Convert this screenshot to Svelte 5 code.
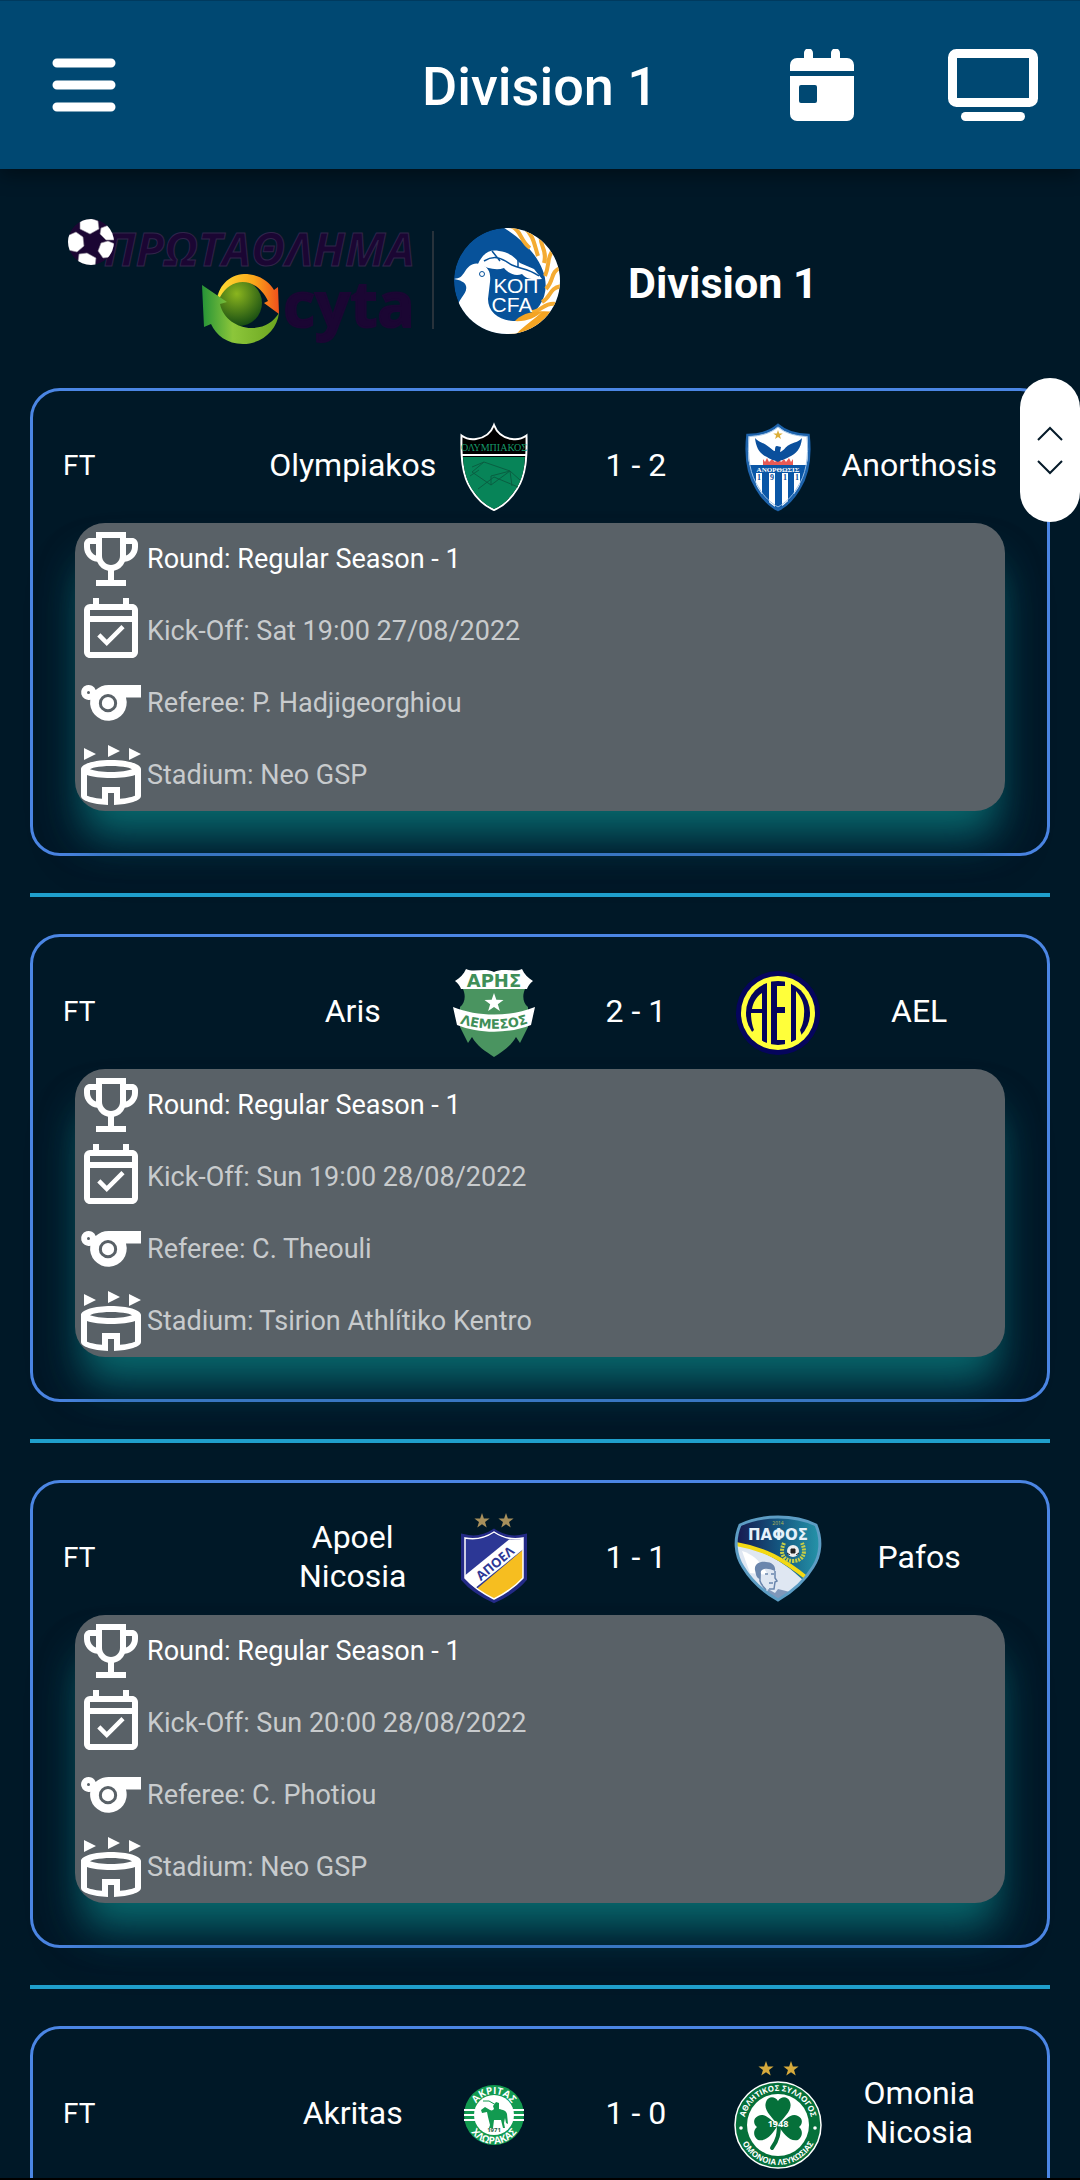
<script>
  const matches = [
    {
      home: 'Olympiakos', away: 'Anorthosis', score: '1 - 2',
      details: ['Round: Regular Season - 1', 'Kick-Off: Sat 19:00 27/08/2022', 'Referee: P. Hadjigeorghiou', 'Stadium: Neo GSP'],
    },
    {
      home: 'Aris', away: 'AEL', score: '2 - 1',
      details: ['Round: Regular Season - 1', 'Kick-Off: Sun 19:00 28/08/2022', 'Referee: C. Theouli', 'Stadium: Tsirion Athlítiko Kentro'],
    },
    {
      home: 'Apoel Nicosia', away: 'Pafos', score: '1 - 1',
      details: ['Round: Regular Season - 1', 'Kick-Off: Sun 20:00 28/08/2022', 'Referee: C. Photiou', 'Stadium: Neo GSP'],
    },
    { home: 'Akritas', away: 'Omonia Nicosia', score: '1 - 0', details: [] },
  ];

  const icons = [
    'M19 5h-2V3H7v2H5c-1.1 0-2 .9-2 2v1c0 2.55 1.92 4.63 4.39 4.94A5.01 5.01 0 0 0 11 15.9V19H7v2h10v-2h-4v-3.1a5.01 5.01 0 0 0 3.61-2.96C19.08 12.63 21 10.55 21 8V7c0-1.1-.9-2-2-2zM5 8V7h2v3.82C5.84 10.4 5 9.3 5 8zm7 6c-1.65 0-3-1.35-3-3V5h6v6c0 1.65-1.35 3-3 3zm7-6c0 1.3-.84 2.4-2 2.82V7h2v1z',
    'M16.53 11.06 15.47 10l-4.88 4.88-2.12-2.12-1.06 1.06L10.59 17l5.94-5.94zM19 3h-1V1h-2v2H8V1H6v2H5a2 2 0 0 0-2 2v14c0 1.1.89 2 2 2h14c1.1 0 2-.9 2-2V5c0-1.1-.9-2-2-2zm0 16H5V9h14v10zM5 7V5h14v2H5z',
    'M11.2 6c-1.7 0-3.2.6-4.3 1.7A2.5 2.5 0 1 0 5.1 10.9a6.1 6.1 0 1 0 11.9-.7h5V6H11.2zM4.5 9a.5.5 0 1 1 0-1 .5.5 0 0 1 0 1zM11 15.1a3 3 0 1 1 0-6.1 3 3 0 0 1 0 6.1zM11 14.1a2 2 0 1 0 0-4.1 2 2 0 0 0 0 4.1z',
    'M7 5 3 7V3l4 2zm11-2v4l4-2-4-2zm-7-1v4l4-2-4-2zM12 7C6.5 7 2 8.3 2 10v9c0 1.5 3.9 2.8 9 3v-4h2v4c5.1-.2 9-1.5 9-3v-9c0-1.7-4.5-3-10-3zm0 2c4.2 0 7 .8 7 1.1-1.4.5-3.8.9-7 .9s-5.6-.4-7-.9C5 9.8 7.8 9 12 9zm8 9.9c-.7.3-2.4.8-5 1V16H9v3.9c-2.600-.2-4.300-.7-5-1V12c1.800.6 4.600 1 8 1s6.200-.4 8-1v6.900z',
  ];

  // Five-pointed star outline around a centre point.
  function star(cx, cy, r) {
    return Array.from({ length: 10 }, (_, i) => {
      const a = -Math.PI / 2 + (i * Math.PI) / 5;
      const d = i % 2 ? r * 0.4 : r;
      return `${(cx + d * Math.cos(a)).toFixed(2)},${(cy + d * Math.sin(a)).toFixed(2)}`;
    }).join(' ');
  }
</script>

{#snippet crest(team)}
  {#if team === 'Olympiakos'}
    <svg class="crest" viewBox="0 0 88 88" role="img" aria-label="Olympiakos crest">
      <path d="M44 2C41 10 34 15 26 16c-6 1-11-1-14.500-3.500C11 34 12 52 21 66c6 10 14 17 23 21 9-4 17-11 23-21 9-14 10-32 9.500-53.500C73 15 68 17 62 16 54 15 47 10 44 2z" fill="#000" stroke="#fff" stroke-width="2" />
      <path d="M13 34h62c-1 13-3 23-9 32-6 9-13 16-22 20-9-4-16-11-22-20-6-9-8-19-9-32z" fill="#078458" />
      <path d="M12 32h64" stroke="#fff" stroke-width="2" />
      <path d="m22 49 12-10 26 9-19 14-19-13zm19 13v-9l19-5 2 15M22 44l12-5M28 66l16-12 24 10M60 48l10 9M20 53l9-6" fill="none" stroke="#0a5f42" stroke-width="1" />
      <text x="44" y="28" font-size="10" fill="#16996b" class="serif">ΟΛΥΜΠΙΑΚΟΣ</text>
    </svg>
  {:else if team === 'Anorthosis'}
    <svg class="crest" viewBox="0 0 88 88" role="img" aria-label="Anorthosis crest">
      <clipPath id="ano"><path d="M44 2C36 9 24 12 13.500 12 11 34 14 52 23 66c6 10 13 17 21 21 8-4 15-11 21-21 9-14 12-32 9.500-54C64 12 52 9 44 2z" /></clipPath>
      <g clip-path="url(#ano)">
        <path fill="#fff" d="M0 0h88v88H0z" />
        <path fill="#0a56a6" d="M0 42h88v46H0z" />
        <path fill="#fff" d="M22 50h6v38h-6zm13 0h6v38h-6zm13 0h6v38h-6zm12 0h6v38h-6z" />
      </g>
      <path d="M29 42v-6l2 3 2-4 2 4 3-3 3 3 3-4 3 4 3-3 2 3 3-4 2 4 2-3v6z" fill="#e85a55" />
      <path d="M21 15c3 4 9 5 14 9 3 2 4 4 6 4 0-3 0-5 2-5l4 1-1 5c5-2 5-5 9-7 5-3 10-3 13-7-1 11-6 16-13 19-5 3-8 3-11 5-4-2-7-2-11-5-7-3-11-9-12-19z" fill="#0a4f9c" />
      <polygon points={star(44, 12, 5)} fill="#dcae38" />
      <text x="44" y="48.500" font-size="7" font-weight="700" fill="#fff" class="serif">ΑΝΟΡΘΩΣΙΣ</text>
      <g font-size="8" font-weight="700" fill="#0a4f9c" class="serif"><text x="25" y="57">1</text><text x="38" y="57">9</text><text x="51" y="57">1</text><text x="63" y="57">1</text></g>
      <path d="M44 2C36 9 24 12 13.500 12 11 34 14 52 23 66c6 10 13 17 21 21 8-4 15-11 21-21 9-14 12-32 9.500-54C64 12 52 9 44 2z" fill="none" stroke="#1d63ac" stroke-width="2.500" />
      <path d="M44 4C36 11 25 13 15 13.500 13 34 16 52 25 65c5 9 12 15 19 19 7-4 14-10 19-19 9-13 12-31 10-51.500C63 13 52 11 44 4z" fill="none" stroke="#9fc3e8" stroke-width="1" />
    </svg>
  {:else if team === 'Aris'}
    <svg class="crest" viewBox="0 0 88 88" role="img" aria-label="Aris crest">
      <path d="M13 20h62c-3 7-2 14 3 18v20l-8 16-4-6c-5 9-13 14-22 20-9-6-17-11-22-20l-4 6-8-16V38c5-4 6-11 3-18z" fill="#4a9460" />
      <path d="M16 0c9 4 18-2 28 3 10-5 19 1 28-3 2 5 6 9 11 12-3 2-5 5-6 8H11c-1-3-3-6-6-8 5-3 9-7 11-12z" fill="#fff" />
      <path d="M3 38c25 10 57 10 82 0l-4 18c-22 9-52 9-74 0L3 38z" fill="#fff" />
      <polygon points={star(44, 34, 10)} fill="#fff" />
      <text x="44" y="18" font-size="18" font-weight="700" fill="#3f8f58" class="wide">ΑΡΗΣ</text>
      <path id="arisArc" d="M6 53c24 9 52 9 76 0" fill="none" />
      <text font-size="13" font-weight="700" fill="#3f8f58" class="wide"><textPath href="#arisArc" startOffset="50%">ΛΕΜΕΣΟΣ</textPath></text>
    </svg>
  {:else if team === 'AEL'}
    <svg class="crest" viewBox="0 0 88 88" role="img" aria-label="AEL crest">
      <circle cx="44" cy="44" r="42" fill="#05055c" />
      <circle cx="44" cy="44" r="37" fill="#ffff3a" />
      <circle cx="44" cy="44" r="32" fill="#05055c" />
      <g fill="#ffff3a">
        <path d="M33 12v64h4V11zM51 12v64h4V11z" />
        <path d="M28 24c-6 4-9 10-10 16h10zM17 44c0 6 1 12 3 17l-4 4 12 9V44z" />
        <path d="M43 17h12v21H43zM43 44h12v27H43zM53 11h4v66h-4zM52 37h4v8h-4z" />
        <path d="M62 22c6 7 9 14 8 23 0 7-2 12-4 16l2 6-6 6z" />
      </g>
    </svg>
  {:else if team === 'Apoel Nicosia'}
    <svg class="crest" viewBox="0 0 88 88" role="img" aria-label="Apoel Nicosia crest">
      <clipPath id="apo"><path d="M44 16c-9 6-20 8-31 5v43c9 11 20 17 31 22 11-5 22-11 31-22V21c-11 3-22 1-31-5z" /></clipPath>
      <g clip-path="url(#apo)">
        <path fill="#2c3795" d="M0 0h88v88H0z" />
        <path fill="#f6be20" d="M88 22v66H10z" />
        <path fill="#fff" d="M8 66 72 14l14 10-62 50z" />
      </g>
      <path d="M44 16c-9 6-20 8-31 5v43c9 11 20 17 31 22 11-5 22-11 31-22V21c-11 3-22 1-31-5z" fill="none" stroke="#232a86" stroke-width="4" />
      <path d="M44 17c-9 6-19 8-29 6v40c9 10 19 16 29 21 10-5 20-11 29-21V23c-10 2-20 0-29-6z" fill="none" stroke="#fff" stroke-width="1.500" />
      <polygon points={star(32, 6, 8)} fill="#a8905c" /><polygon points={star(56, 6, 8)} fill="#a8905c" />
      <text transform="translate(48 52) rotate(-40)" font-size="13" font-weight="700" fill="#2c3795">ΑΠΟΕΛ</text>
    </svg>
  {:else if team === 'Pafos'}
    <svg class="crest" viewBox="0 0 88 88" role="img" aria-label="Pafos crest">
      <linearGradient id="paf"><stop offset="0" stop-color="#18164c" /><stop offset=".5" stop-color="#14557f" /><stop offset="1" stop-color="#2697ab" /></linearGradient>
      <clipPath id="pafc"><path d="M44 2C30 2 16 5 6 10 0 24 1 40 9 52c9 15 21 25 35 33 14-8 26-18 35-33 8-12 9-28 3-42C72 5 58 2 44 2z" /></clipPath>
      <g clip-path="url(#pafc)">
        <path fill="url(#paf)" d="M0 0h88v88H0z" />
        <path d="M0 30c28 4 50 16 72 38L44 88H20L0 50z" fill="#dfe7f2" />
        <path d="M8 36c13 4 19 12 26 24L16 58z" fill="#fff" />
        <path d="M2 29c29 5 47 15 72 35" fill="none" stroke="#f4d914" stroke-width="4" />
        <path d="M21 55c-1-6 5-9 11-8 6 0 10 4 9 9-7-3-11-3-14 0l-1 8c-4-1-4-5-5-9z" fill="#6a86ad" />
        <path d="M26 58v8c1 4 4 6 6 9M41 56v7l2 3-2 1-1 7h-5M31 59h3M37 59h3M35 68h4" fill="none" stroke="#6a86ad" stroke-width="1.500" />
        <path d="M30 88l4-14 7 4 3-4 16 4-16 10z" fill="#7f97ba" />
      </g>
      <path d="M44 2C30 2 16 5 6 10 0 24 1 40 9 52c9 15 21 25 35 33 14-8 26-18 35-33 8-12 9-28 3-42C72 5 58 2 44 2z" fill="none" stroke="#5d9dc4" stroke-width="3" />
      <path d="M50 28c-5 11 0 18 9 18s14-7 9-18" fill="none" stroke="#c9cf45" stroke-width="4" stroke-dasharray="2 1" />
      <circle cx="59" cy="36" r="6" fill="#eee" /><path d="M57 34h4v4h-4zM53 38l3 2M65 38l-3 2" fill="#222" stroke="#222" />
      <text x="44" y="10" font-size="5" fill="#b9b851">2014</text>
      <text x="44" y="25" font-size="15" font-weight="700" fill="#e6f1fa" class="wide">ΠΑΦΟΣ</text>
    </svg>
  {:else if team === 'Akritas'}
    <svg class="crest small" viewBox="0 0 60 60" role="img" aria-label="Akritas crest">
      <circle cx="30" cy="30" r="30" fill="#129a50" />
      <path d="M0 25h60M0 30h60M0 35h60" stroke="#fff" stroke-width="2" />
      <circle cx="30" cy="30" r="20" fill="#fff" />
      <path d="m17 25 4-3 5 3c2 1 3 0 4-1l-1-3 3-4 3 1v6c4 1 7 1 8 5l1 10-2-1-1-5-1 5 1 5h-2l-2-8-7 0-1 8h-4l1-3-2-8-1-5-5 1z" fill="#129a50" />
      <path d="M19 16h6l7 4" fill="none" stroke="#129a50" stroke-width="1" />
      <path id="akTop" d="M9 30a21 21 0 0 1 42 0" fill="none" />
      <path id="akBottom" d="M2 31a28 28 0 0 0 56 0" fill="none" />
      <g font-weight="700" fill="#fff">
        <text font-size="10"><textPath href="#akTop" startOffset="50%">ΑΚΡΙΤΑΣ</textPath></text>
        <text font-size="10"><textPath href="#akBottom" startOffset="50%">ΧΛΩΡΑΚΑΣ</textPath></text>
      </g>
      <text x="30" y="47" font-size="6" font-weight="700" fill="#225b3b">1971</text>
    </svg>
  {:else}
    <svg class="crest tall" viewBox="0 0 88 108" role="img" aria-label="Omonia Nicosia crest">
      <polygon points={star(32, 8, 8)} fill="#d6aa3c" /><polygon points={star(57, 8, 8)} fill="#d6aa3c" />
      <circle cx="44" cy="64" r="43" fill="#05703a" stroke="#fff" stroke-width="1.500" />
      <circle cx="44" cy="64" r="31" fill="#fff" />
      <path d="M44 64c-6-8-15-15-12-23 2-6 9-6 12-1 3-5 10-5 12 1 3 8-6 15-12 23zM44 64c-8-5-13-13-20-9-6 3-4 9-1 11-4 3-4 10 1 13 9 2 15-7 20-15zM44 64c8-5 13-13 20-9 6 3 4 9 1 11 4 3 4 10-1 13-9 2-15-7-20-15z" fill="#05703a" />
      <path d="M45 61c0 12-1 18-7 26" fill="none" stroke="#05703a" stroke-width="4" stroke-linecap="round" />
      <text x="44" y="66" font-size="9" font-weight="700" fill="#fff">1948</text>
      <circle cx="7" cy="67" r="1.800" fill="#fff" /><circle cx="81" cy="67" r="1.800" fill="#fff" />
      <path id="omTop" d="M10 64a34 34 0 0 1 68 0" fill="none" />
      <path id="omBottom" d="M4 64a40 40 0 0 0 80 0" fill="none" />
      <g font-size="8" font-weight="700" fill="#fff">
        <text><textPath href="#omTop" startOffset="50%">ΑΘΛΗΤΙΚΟΣ ΣΥΛΛΟΓΟΣ</textPath></text>
        <text><textPath href="#omBottom" startOffset="50%">ΟΜΟΝΟΙΑ ΛΕΥΚΩΣΙΑΣ</textPath></text>
      </g>
    </svg>
  {/if}
{/snippet}

<div class="app">
  <header class="topbar">
    <button class="menu" aria-label="Menu">
      <svg width="64" height="72" viewBox="0 0 64 72"><path d="M5 14h54M5 36h54M5 58h54" stroke="#fff" stroke-width="9" stroke-linecap="round" /></svg>
    </button>
    <h1>Division 1</h1>
    <div class="actions">
      <button aria-label="Calendar">
        <svg width="64" height="72" viewBox="0 0 64 72" fill="#fff">
          <path d="M0 22v-6a7 7 0 0 1 7-7h7V4a4 4 0 0 1 9 0v5h18V4a4 4 0 0 1 9 0v5h7a7 7 0 0 1 7 7v6z" />
          <path fill-rule="evenodd" d="M0 27h64v38a7 7 0 0 1-7 7H7a7 7 0 0 1-7-7zM11 36a2 2 0 0 0-2 2v14a2 2 0 0 0 2 2h14a2 2 0 0 0 2-2V38a2 2 0 0 0-2-2z" />
        </svg>
      </button>
      <button aria-label="Live TV">
        <svg width="90" height="72" viewBox="0 0 90 72">
          <rect x="4.500" y="4.500" width="81" height="49" rx="4" fill="none" stroke="#fff" stroke-width="9" />
          <path d="M17.500 67.500h55" stroke="#fff" stroke-width="9" stroke-linecap="round" />
        </svg>
      </button>
    </div>
  </header>

  <main>
    <section class="league">
      <svg class="league-logo" viewBox="-1 3 504 140" role="img" aria-label="Cyta Championship, KOP CFA">
        <defs>
          <radialGradient id="core" cx=".45" cy=".3" r=".7"><stop offset="0" stop-color="#8bb51e" /><stop offset="1" stop-color="#174d13" /></radialGradient>
          <linearGradient id="orange"><stop offset="0" stop-color="#ffdf35" /><stop offset=".6" stop-color="#faa61a" /><stop offset="1" stop-color="#f0501c" /></linearGradient>
          <linearGradient id="green" x1="0" x2="1"><stop offset="0" stop-color="#259337" /><stop offset=".4" stop-color="#8cc63a" /><stop offset="1" stop-color="#6ba51f" /></linearGradient>
          <clipPath id="ballClip"><circle cx="30" cy="32" r="23" /></clipPath>
          <clipPath id="kopClip"><circle cx="446" cy="71" r="53" /></clipPath>
        </defs>
        <text class="mark" x="198" y="56" font-size="46" font-weight="700" font-style="italic">ΠΡΩΤΑΘΛΗΜΑ</text>
        <g clip-path="url(#ballClip)">
          <circle cx="30" cy="32" r="23" fill="#1b0633" />
          <g fill="#fff" stroke="#8d8796" stroke-width=".6">
            <path d="m19 12 8-5 10 4 1 8-9 5-10-5z" /><path d="m6 26 9-4 7 5 1 9-7 6-9-2-3-8z" /><path d="m40 18 8-3 8 8-2 7-9 0-6-6z" /><path d="m40 33 7-2 7 3-2 13-10 1-5-7z" /><path d="m18 44 8-1 9 5-1 9-10 1-7-6z" />
          </g>
        </g>
        <text class="mark heavy" x="288" y="117" font-size="62" font-weight="700">cyta</text>
        <circle cx="178" cy="93" r="23" fill="url(#core)" />
        <path d="M156 94c0-18 12-29 27-30 14 0 25 7 30 16l4-3 1 27-15-11 4-2c-7-15-20-22-32-18-9 3-15 10-19 21z" fill="url(#orange)" />
        <path d="m141 75 25 17-7 2c3 15 18 24 31 24 14 0 22-6 28-15-2 17-17 31-36 31-16 0-27-9-32-20l-7 3z" fill="url(#green)" />
        <path d="M372 21v98" stroke="#28323b" stroke-width="2" />
        <g clip-path="url(#kopClip)">
          <circle cx="446" cy="71" r="53" fill="#07529a" />
          <path d="M440 16c42 0 62 22 62 58s-22 56-54 56l12-18c40-22 30-66-20-96z" fill="#fff" />
          <path d="M448 15c14 6 10 15 21 23M463 17c10 9 10 17 14 29M480 23c-3 12 7 16 3 30M494 38c-9 9-5 17-10 28M501 57c-13 5-7 13-16 22M501 76c-14 2-10 11-20 16M496 94c-13-2-15 7-25 8" fill="none" stroke="#f4ab32" stroke-width="4" />
          <circle cx="453" cy="79" r="28" fill="#07529a" />
          <path d="M446 127c6-22 20-28 50-25l-14 24-28 9z" fill="#f4a423" />
          <path d="M393 69c6-1 7-2 10-6 4-7 9-11 16-9 9 3 11 9 10 18l-2 17c0 13 11 21 25 22 14 1 22-3 30-10-12 12-27 18-34 35h-22c-21-6-33-21-31-35 2-13 12-17 10-25-1-4-6-6-12-7z" fill="#fff" />
          <path d="M417 54c5-11 12-15 21-13 10 1 15 6 21 12l14 6 8 10c-9 1-16 0-20-5-7 3-14-1-18-6-8 3-17 0-26-4z" fill="#fff" />
          <path d="M423 51c13-8 21 0 28 4 8 4 16 3 27 11M431 41l8 10M457 49v9" fill="none" stroke="#07529a" stroke-width="1.500" />
          <circle cx="421" cy="64" r="2.500" fill="none" stroke="#07529a" />
          <text class="sans" x="455" y="83" font-size="21" fill="#fff">ΚΟΠ</text>
          <text class="sans" x="451" y="102" font-size="21" fill="#fff">CFA</text>
        </g>
      </svg>
      <h2>Division 1</h2>
    </section>

    {#each matches as m, i}
      {#if i > 0}<hr />{/if}
      <article>
        <div class="fixture">
          <span class="status">FT</span>
          <span class="team">{m.home}</span>
          {@render crest(m.home)}
          <span class="score">{m.score}</span>
          {@render crest(m.away)}
          <span class="team">{m.away}</span>
        </div>
        {#if m.details.length}
          <ul>
            {#each m.details as line, k}
              <li class:lead={k === 0}>
                <svg viewBox="0 0 24 24" aria-hidden="true"><path fill="#fff" fill-rule="evenodd" d={icons[k]} /></svg>
                {line}
              </li>
            {/each}
          </ul>
        {/if}
      </article>
    {/each}
  </main>

  <div class="scroller">
    <button aria-label="Scroll up"><svg width="26" height="16" viewBox="0 0 26 16"><path d="m1 14 12-12 12 12" /></svg></button>
    <button aria-label="Scroll down"><svg width="26" height="16" viewBox="0 0 26 16"><path d="m1 2 12 12 12-12" /></svg></button>
  </div>
</div>

<style>
  :global(body) { margin: 0; background: #001827; }
  .app {
    position: relative;
    height: 100vh;
    overflow: hidden;
    box-sizing: border-box;
    border-bottom: 2px solid #000;
    background: #001827;
    color: #fff;
    font-family: Roboto, "Liberation Sans", sans-serif;
  }
  button { border: 0; padding: 0; background: none; display: flex; cursor: pointer; }
  svg { display: block; }
  svg text { text-anchor: middle; font-family: "Open Sans", "Liberation Sans", sans-serif; }
  svg text.serif, .serif text { font-family: "Liberation Serif", serif; }
  svg text.wide { font-family: "DejaVu Sans", sans-serif; }
  svg text.sans { font-family: "Liberation Sans", sans-serif; }
  h1, h2 { margin: 0; }
  .topbar {
    display: grid;
    grid-template-columns: 1fr auto 1fr;
    align-items: center;
    height: 169px;
    box-sizing: border-box;
    padding: 0 42px;
    background: #004872;
    border-top: 1px solid #003a5e;
    box-shadow: 0 6px 18px rgba(0, 0, 0, .4);
  }
  .menu { margin-left: 10px; }
  h1 { padding-top: 4px; font-size: 54px; line-height: 64px; font-weight: 500; }
  .actions { display: flex; justify-content: flex-end; gap: 94px; }
  main { padding: 0 30px; }
  .league { display: flex; align-items: center; gap: 64px; height: 219px; box-sizing: border-box; padding: 8px 30px 0; }
  .league-logo { width: 504px; height: 140px; overflow: visible; }
  .mark { fill: #1b0633; stroke: #30254a; stroke-width: 1px; }
  .mark.heavy { stroke: #1b0633; stroke-width: 2px; }
  h2 { font-size: 43px; line-height: 50px; font-weight: 700; }
  article { border: 3px solid #4b86e4; border-radius: 30px; padding: 0 42px 42px; }
  hr { height: 4px; border: 0; margin: 37px 0; background: #1f9fcc; }
  .fixture {
    display: grid;
    grid-template-columns: minmax(0, 17fr) repeat(5, minmax(0, 11fr));
    align-items: center;
    justify-items: center;
    margin: 0 -42px;
    padding: 32px 57px 12px 30px;
    font-size: 32px;
    line-height: 39px;
  }
  .fixture span { padding-bottom: 4px; }
  .status { justify-self: start; font-size: 28px; }
  .team { text-align: center; }
  .crest { width: 88px; height: 88px; overflow: visible; }
  .crest.small { width: 60px; height: 60px; }
  .crest.tall { height: 108px; }
  ul {
    list-style: none;
    margin: 0;
    padding: 0;
    border-radius: 30px;
    background: #596167;
    box-shadow: 0 32px 40px -8px #08686c, 0 40px 50px rgba(0, 32, 72, .25);
  }
  li { display: flex; align-items: center; height: 72px; font-size: 27px; line-height: 32px; color: #c8cbcd; }
  li.lead { color: #fff; }
  li svg { width: 72px; height: 72px; }
  .scroller {
    position: absolute;
    top: 378px;
    right: 0;
    display: flex;
    flex-direction: column;
    align-items: center;
    justify-content: center;
    gap: 17px;
    width: 60px;
    height: 144px;
    border-radius: 30px;
    background: #fff;
  }
  .scroller path { fill: none; stroke: #061b2a; stroke-width: 2; }
</style>
